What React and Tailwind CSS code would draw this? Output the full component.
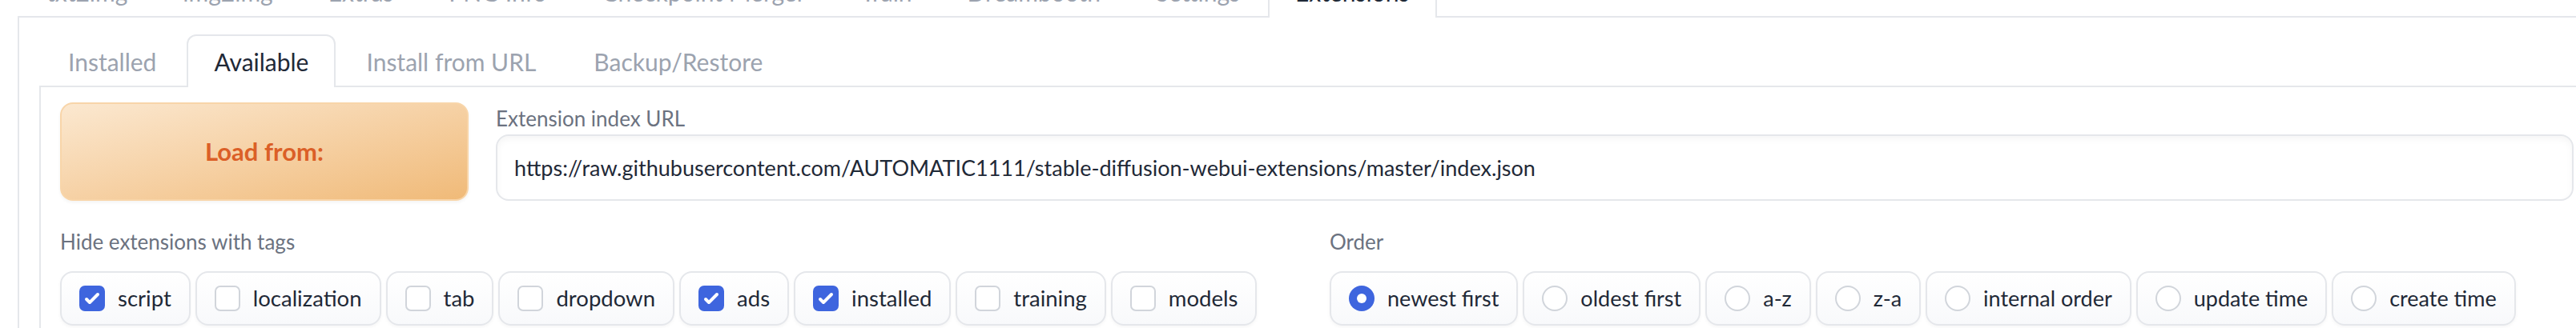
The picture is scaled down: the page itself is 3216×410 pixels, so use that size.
import React from "react";

const topTabs = ["txt2img", "img2img", "Extras", "PNG Info", "Checkpoint Merger", "Train", "Dreambooth", "Settings", "Extensions"];
const innerTabs = ["Installed", "Available", "Install from URL", "Backup/Restore"];

const tags = [
  { label: "script", checked: true },
  { label: "localization", checked: false },
  { label: "tab", checked: false },
  { label: "dropdown", checked: false },
  { label: "ads", checked: true },
  { label: "installed", checked: true },
  { label: "training", checked: false },
  { label: "models", checked: false },
];

const orders = ["newest first", "oldest first", "a-z", "z-a", "internal order", "update time", "create time"];

const INDEX_URL =
  "https://raw.githubusercontent.com/AUTOMATIC1111/stable-diffusion-webui-extensions/master/index.json";

const TabNav = ({ tabs, active, gap }) => (
  <div className={`flex pl-[2px] border-b-2 border-[#e5e7eb] ${gap}`}>
    {tabs.map((tab) => (
      <button
        key={tab}
        className={
          tab === active
            ? "h-[66px] -mb-[2px] px-[32px] border-2 border-b-0 border-[#e5e7eb] rounded-t-[12px] bg-white text-[30px] text-[#1f2937]"
            : "h-[66px] -mb-[2px] px-[32px] border-2 border-b-0 border-transparent text-[30px] text-[#9ca3af]"
        }
      >
        {tab}
      </button>
    ))}
  </div>
);

const Pill = ({ children, label, size }) => (
  <label className={`flex items-center gap-[16px] h-[68px] px-[22px] border-2 border-[#e5e7eb] rounded-[16px] bg-linear-to-t from-[#f8f9fb] to-white shadow-[0_2px_4px_rgba(0,0,0,0.04)] text-[#1f2937] whitespace-nowrap ${size}`}>
    {children}
    <span>{label}</span>
  </label>
);

const Checkbox = ({ checked }) =>
  checked ? (
    <span className="w-[32px] h-[32px] rounded-[7px] bg-[#3e65de] flex items-center justify-center">
      <svg viewBox="0 0 16 16" className="w-[32px] h-[32px]" fill="white">
        <path d="M12.207 4.793a1 1 0 010 1.414l-5 5a1 1 0 01-1.414 0l-2-2a1 1 0 011.414-1.414L6.5 9.086l4.293-4.293a1 1 0 011.414 0z" />
      </svg>
    </span>
  ) : (
    <span className="w-[32px] h-[32px] rounded-[7px] border-2 border-[#d1d5db] bg-white" />
  );

const Radio = ({ checked }) =>
  checked ? (
    <span className="w-[32px] h-[32px] rounded-full bg-[#3e65de] flex items-center justify-center">
      <span className="w-[12px] h-[12px] rounded-full bg-white" />
    </span>
  ) : (
    <span className="w-[32px] h-[32px] rounded-full border-2 border-[#d1d5db] bg-white" />
  );

export default function App() {
  return (
    <div className="w-[3216px] h-[410px] overflow-hidden bg-white [font-family:Lato,sans-serif]">
      <div className="ml-[22px] w-[3244px] -mt-[44px]">
        <TabNav tabs={topTabs} active="Extensions" gap="gap-[1px]" />

        {/* Extensions tab */}
        <div className="border-x-2 border-[#e5e7eb] pt-[21px] px-[25px] h-[420px]">
          <TabNav tabs={innerTabs} active="Available" gap="gap-[4px]" />

          {/* Available tab */}
          <div className="border-x-2 border-[#e5e7eb] pt-[19px] px-[24px] h-[360px]">
            <div className="flex gap-[34px]">
              <button className="w-[510px] h-[123px] shrink-0 rounded-[16px] border-2 border-[#f8d5a9] bg-linear-to-br from-[#fbe8d0] to-[#f0ba78] text-[31px] font-bold text-[#db5f27] shadow-[0_2px_4px_rgba(0,0,0,0.05)]">
                Load from:
              </button>
              <div className="flex-1 flex flex-col">
                <span className="leading-[40px] text-[26px] text-[#6b7280]">Extension index URL</span>
                <input
                  readOnly
                  value={INDEX_URL}
                  className="h-[83px] w-full px-[21px] border-2 border-[#e5e7eb] rounded-[16px] bg-white shadow-[inset_0_4px_8px_rgba(0,0,0,0.04)] text-[27px] text-[#1f2937] outline-none"
                />
              </div>
            </div>

            <div className="mt-[31px] grid grid-cols-2 gap-[32px]">
              <div>
                <span className="block leading-[40px] text-[26px] text-[#6b7280]">Hide extensions with tags</span>
                <div className="mt-[17px] flex gap-[6px]">
                  {tags.map((t) => (
                    <Pill key={t.label} label={t.label} size="text-[27.5px]">
                      <Checkbox checked={t.checked} />
                    </Pill>
                  ))}
                </div>
              </div>
              <div>
                <span className="block leading-[40px] text-[26px] text-[#6b7280]">Order</span>
                <div className="mt-[17px] flex gap-[6px]">
                  {orders.map((o, i) => (
                    <Pill key={o} label={o} size="text-[27px]">
                      <Radio checked={i === 0} />
                    </Pill>
                  ))}
                </div>
              </div>
            </div>
          </div>
        </div>
      </div>
    </div>
  );
}
